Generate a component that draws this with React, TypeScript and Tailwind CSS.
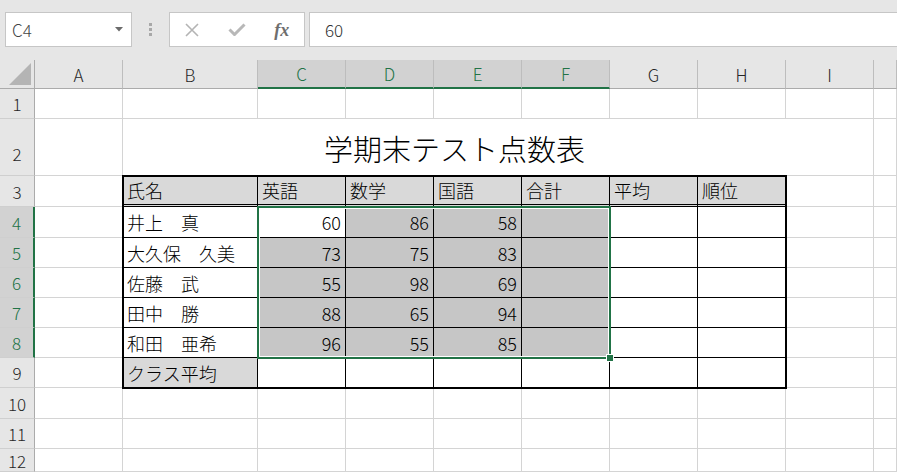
import React from "react";

// explicit grid placement classes (written out so tailwind picks them up)
const CS = [
  "col-start-1", "col-start-2", "col-start-3", "col-start-4", "col-start-5", "col-start-6",
  "col-start-7", "col-start-8", "col-start-9", "col-start-10", "col-start-11",
];
const RS = [
  "row-start-1", "row-start-2", "row-start-3", "row-start-4", "row-start-5", "row-start-6", "row-start-7",
  "row-start-8", "row-start-9", "row-start-10", "row-start-11", "row-start-12", "row-start-13",
];

const LETTERS = ["A", "B", "C", "D", "E", "F", "G", "H", "I", ""];
const SELECTED_COLS = ["C", "D", "E", "F"];

// table B3:H9
const header = ["氏名", "英語", "数学", "国語", "合計", "平均", "順位"];
const students: { name: string; scores: number[] }[] = [
  { name: "井上　真", scores: [60, 86, 58] },
  { name: "大久保　久美", scores: [73, 75, 83] },
  { name: "佐藤　武", scores: [55, 98, 69] },
  { name: "田中　勝", scores: [88, 65, 94] },
  { name: "和田　亜希", scores: [96, 55, 85] },
];

const FormulaBar = () => (
  <div className="h-[60px] bg-[#e6e6e6] flex items-start pt-[12px] pl-[5px]">
    <div className="w-[127px] h-[35px] bg-white border border-[#c6c6c6] flex items-center justify-between pl-[6px] pr-[8px]">
      <span className="text-[17px] leading-none text-[#444] font-light">C4</span>
      <svg width="8" height="5" viewBox="0 0 8 5">
        <path d="M0 0h8L4 4.5z" fill="#6b6b6b" />
      </svg>
    </div>
    <div className="w-[37px] h-[35px] flex flex-col items-center justify-center gap-[2px]">
      <div className="w-[3px] h-[3px] bg-[#a8a8a8]" />
      <div className="w-[3px] h-[3px] bg-[#a8a8a8]" />
      <div className="w-[3px] h-[3px] bg-[#a8a8a8]" />
    </div>
    <div className="w-[136px] h-[35px] bg-white border border-[#c6c6c6] flex items-center">
      <div className="flex-1 flex justify-center">
        <svg width="16" height="14" viewBox="0 0 16 14">
          <path d="M2 1l12 12M14 1L2 13" stroke="#b4b4b4" strokeWidth="1.6" fill="none" />
        </svg>
      </div>
      <div className="flex-1 flex justify-center">
        <svg width="18" height="13" viewBox="0 0 18 13">
          <path d="M1.5 6.5l5 5L16.5 1.5" stroke="#b8b8b8" strokeWidth="3" fill="none" />
        </svg>
      </div>
      <div className="flex-1 flex justify-center">
        <span className="font-['Liberation_Serif',serif] italic font-bold text-[18px] leading-none text-[#6e6e6e]">
          fx
        </span>
      </div>
    </div>
    <div className="ml-[4px] flex-1 h-[35px] bg-white border border-[#c6c6c6] border-r-0 flex items-center pl-[15px]">
      <span className="text-[17px] leading-none text-[#333] font-light">60</span>
    </div>
  </div>
);

const Sheet = () => {
  const cells: React.ReactNode[] = [];

  // corner
  cells.push(
    <div
      key="corner"
      className={`${CS[0]} ${RS[0]} bg-[#e6e6e6] border-r border-b border-[#ababab] flex items-end justify-end pr-[3px] pb-[3px]`}
    >
      <svg width="22" height="22" viewBox="0 0 22 22">
        <path d="M22 0V22H0z" fill="#b4b4b4" />
      </svg>
    </div>
  );

  // column headers
  LETTERS.forEach((l, i) => {
    const sel = SELECTED_COLS.includes(l);
    cells.push(
      <div
        key={`ch-${i}`}
        className={`${CS[i + 1]} ${RS[0]} flex items-center justify-center text-[17px] leading-none font-light border-r border-r-[#bdbdbd] ${
          sel
            ? "bg-[#d2d2d2] text-[#217346] border-b-2 border-b-[#217346]"
            : "bg-[#e6e6e6] text-[#262626] border-b border-b-[#ababab]"
        }`}
      >
        {l}
      </div>
    );
  });

  for (let r = 1; r <= 12; r++) {
    const sel = r >= 4 && r <= 8;
    cells.push(
      <div
        key={`rh-${r}`}
        className={`${CS[0]} ${RS[r]} flex justify-center text-[17px] leading-none font-light border-b border-b-[#cfcfcf] ${
          r === 2 ? "items-end pb-[13px]" : "items-center"
        } ${
          sel
            ? "bg-[#d2d2d2] text-[#217346] border-r-2 border-r-[#217346]"
            : "bg-[#e6e6e6] text-[#262626] border-r border-r-[#ababab]"
        }`}
      >
        {r}
      </div>
    );

    for (let c = 1; c <= 10; c++) {
      const inTable = c >= 2 && c <= 8;
      const pos = `${CS[c]} ${RS[r]}`;

      if (r === 2 && inTable) {
        if (c === 2) {
          cells.push(
            <div
              key="title"
              className="col-start-3 col-end-10 row-start-3 bg-white border-b border-[#d4d4d4] flex items-center justify-center pt-[2px] text-[29px] leading-none font-light"
            >
              学期末テスト点数表
            </div>
          );
        }
        continue;
      }

      if (r >= 3 && r <= 9 && inTable) {
        let text: React.ReactNode = "";
        let bg = "bg-white";
        let align = "justify-start pl-[4px]";
        if (r === 3) {
          text = header[c - 2];
          bg = "bg-[#d9d9d9]";
        } else if (r <= 8) {
          const s = students[r - 4];
          if (c === 2) text = s.name;
          else if (c <= 5) {
            text = s.scores[c - 3];
            align = "justify-end pr-[4px]";
          }
          if (c >= 3 && c <= 6 && !(r === 4 && c === 3)) bg = "bg-[#c6c6c6]";
        } else if (c === 2) {
          text = "クラス平均";
          bg = "bg-[#d9d9d9]";
        }
        cells.push(
          <div
            key={`t-${r}-${c}`}
            className={`${pos} ${bg} ${align} flex items-center text-[18px] leading-none font-light border-r border-r-black ${
              r === 3 ? "border-b-[3px] border-double border-b-black" : "border-b border-b-black"
            }`}
          >
            {text}
          </div>
        );
        continue;
      }

      cells.push(
        <div key={`g-${r}-${c}`} className={`${pos} bg-white border-r border-b border-[#d4d4d4]`} />
      );
    }
  }

  return (
    <div className="grid grid-cols-[35px_88px_135px_88px_88px_88px_88px_88px_88px_88px_1fr] grid-rows-[29px_30px_57px_31px_31px_30px_30px_30px_30px_30px_31px_30px_23px]">
      {cells}
      {/* thick outline of the table B3:H9 */}
      <div className="col-start-3 col-end-10 row-start-4 row-end-11 -m-px border-2 border-black z-10 pointer-events-none" />
      {/* selection C4:F8 */}
      <div className="col-start-4 col-end-8 row-start-5 row-end-10 -m-px border-2 border-[#217346] shadow-[inset_0_0_0_1px_white] z-20 relative pointer-events-none">
        <div className="absolute -right-[5px] -bottom-[5px] w-[8px] h-[8px] bg-[#217346] border border-white" />
      </div>
    </div>
  );
};

export default function App() {
  return (
    <div className="w-[897px] h-[472px] overflow-hidden bg-white font-['Noto_Sans_CJK_JP',sans-serif] text-black">
      <FormulaBar />
      <Sheet />
    </div>
  );
}
